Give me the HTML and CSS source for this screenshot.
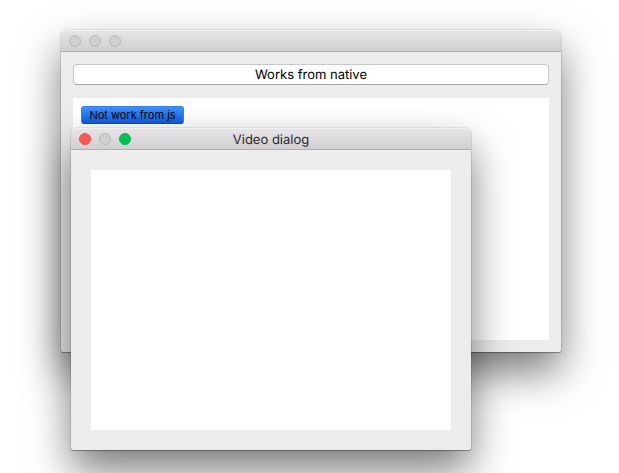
FILE: index.html
```html
<!DOCTYPE html>
<html lang="en">
<head>
<meta charset="utf-8">
<title>Video dialog</title>
<link rel="stylesheet" href="styles.css">
</head>
<body>
<div class="window window-main">
  <div class="titlebar">
    <div class="lights">
      <span class="light"></span><span class="light"></span><span class="light"></span>
    </div>
  </div>
  <div class="main-body">
    <div class="native-field">Works from native</div>
    <div class="web-area">
      <button class="js-button">Not work from js</button>
    </div>
  </div>
</div>
<div class="window window-dialog">
  <div class="titlebar">
    <div class="lights">
      <span class="light light-close"></span><span class="light"></span><span class="light light-zoom"></span>
    </div>
    <div class="title">Video dialog</div>
  </div>
  <div class="dialog-body">
    <div class="video"></div>
  </div>
</div>
</body>
</html>
```
FILE: styles.css
```css
html, body {
  margin: 0;
  height: 100%;
  overflow: hidden;
  background: #fff;
  font-family: "Inter", "Liberation Sans", sans-serif;
  text-rendering: geometricPrecision;
}
.window {
  position: absolute;
  box-sizing: border-box;
  display: flex;
  flex-direction: column;
  width: 500px;
  height: 322px;
  background: #ececec;
  border-radius: 5px 5px 2px 2px;
  box-shadow: 0 0 0 1px rgba(0, 0, 0, 0.07), 0 1px 1px rgba(0, 0, 0, 0.3), 0 20px 42px rgba(0, 0, 0, 0.52);
}
.window-main { left: 61px; top: 30px; }
.window-dialog { left: 71px; top: 128px; width: 400px; }
.titlebar {
  position: relative;
  box-sizing: border-box;
  flex: none;
  height: 22px;
  display: flex;
  align-items: center;
  justify-content: center;
  background: linear-gradient(#e6e4e6, #d1cfd1);
  border-top: 1px solid #f2f1f2;
  border-bottom: 1px solid #b1afb1;
  border-radius: 5px 5px 0 0;
}
.lights {
  position: absolute;
  left: 8px;
  top: 4px;
  display: flex;
  gap: 8px;
}
.light {
  box-sizing: border-box;
  width: 12px;
  height: 12px;
  border-radius: 50%;
  background: #d0cfd0;
  border: 1px solid #b9b7b9;
}
.light-close { background: #fc5753; border-color: #f0504c; }
.light-zoom { background: #00c251; border-color: #00b84c; }
.title {
  padding-top: 2px;
  font-size: 13px;
  color: #2a2a2a;
  line-height: 16px;
}
.main-body {
  flex: 1;
  display: flex;
  flex-direction: column;
  padding: 12px;
}
.native-field {
  box-sizing: border-box;
  flex: none;
  height: 21px;
  padding-top: 1px;
  background: #fff;
  border: 1px solid #c8c8c8;
  border-bottom-color: #a8a8a8;
  border-radius: 4px;
  text-align: center;
  font-size: 13px;
  line-height: 18px;
  color: #000;
}
.web-area {
  flex: 1;
  margin-top: 13px;
  background: #fff;
  padding: 8px;
}
.js-button {
  display: block;
  box-sizing: border-box;
  width: 103px;
  height: 18px;
  padding: 1px 0 0;
  font-family: inherit;
  font-size: 11px;
  line-height: 15px;
  color: #000;
  background: linear-gradient(#3d92fc, #0d5ce2);
  border: 1px solid #3a80ea;
  border-bottom-color: #0e4fc0;
  border-radius: 3px;
}
.dialog-body {
  flex: 1;
  display: flex;
  padding: 20px;
}
.video {
  flex: 1;
  background: #fff;
}
```
